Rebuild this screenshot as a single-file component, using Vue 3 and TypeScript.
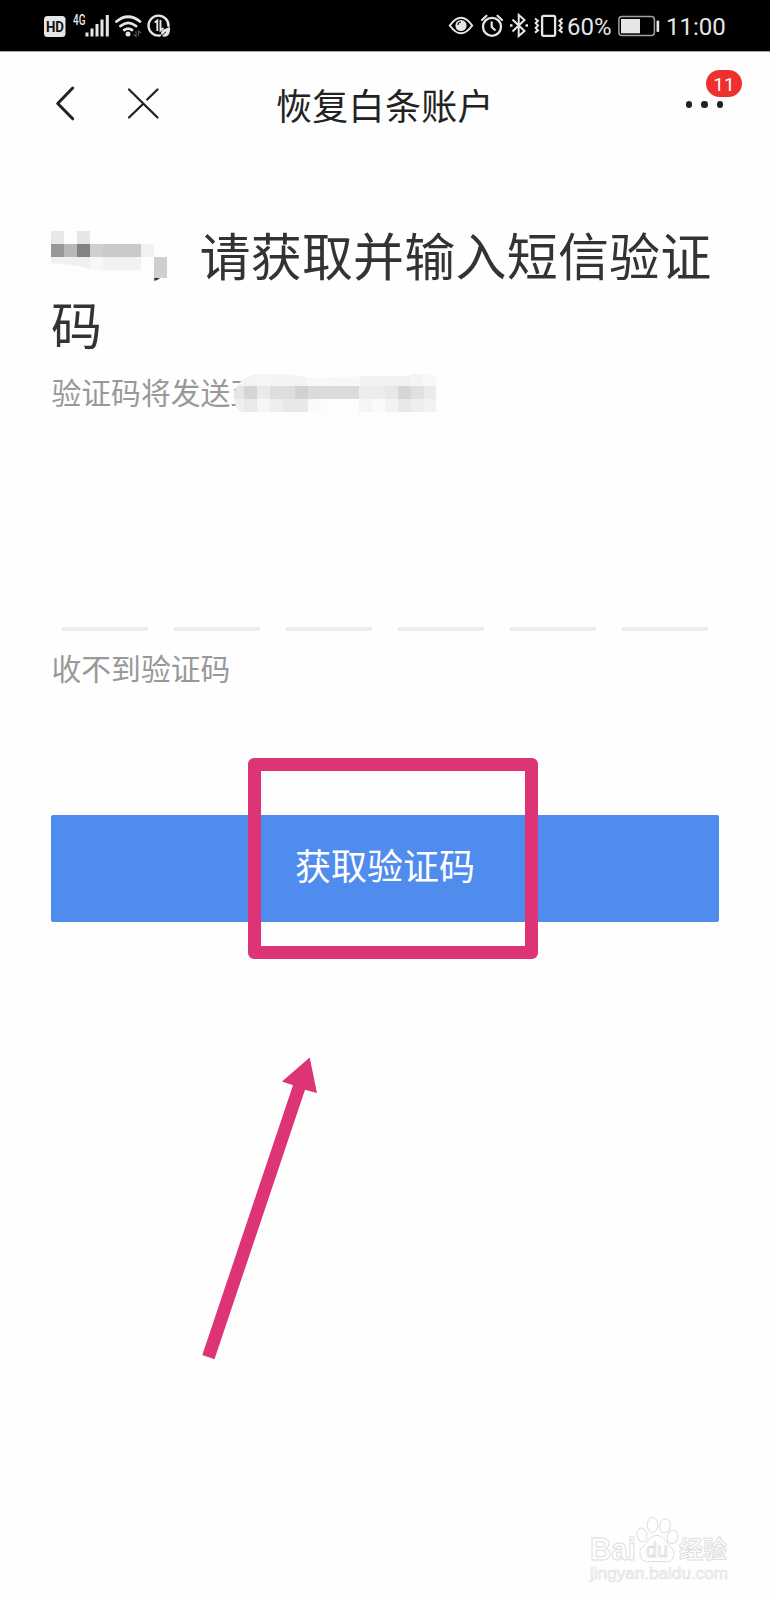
<script setup lang="ts">
interface Tile {
  x: number
  y: number
  w: number
  h: number
  c: string
}

const codeLength = 6

const nameTiles: Tile[] = [
  { x: 51, y: 21, w: 13, h: 13, c: '#e8e8e8' },
  { x: 77, y: 21, w: 13, h: 13, c: '#e6e6e6' },
  { x: 51, y: 34, w: 13, h: 13, c: '#989898' },
  { x: 64, y: 34, w: 13, h: 13, c: '#b8b8b8' },
  { x: 77, y: 34, w: 13, h: 13, c: '#838383' },
  { x: 90, y: 34, w: 13, h: 13, c: '#cfcfcf' },
  { x: 103, y: 34, w: 38, h: 13, c: '#c9c9c9' },
  { x: 141, y: 34, w: 13, h: 13, c: '#f1f1f1' },
  { x: 90, y: 47, w: 13, h: 13, c: '#f7f7f7' },
  { x: 103, y: 47, w: 38, h: 13, c: '#f2f2f2' },
  { x: 154, y: 47, w: 13, h: 21, c: '#cfcfcf' },
]

const phoneTiles: Tile[] = [
  { x: 0, y: 0, w: 23, h: 12, c: '#f3f3f3' },
  { x: 23, y: 0, w: 13, h: 12, c: '#f6f6f6' },
  { x: 36, y: 0, w: 37, h: 12, c: '#f4f4f4' },
  { x: 73, y: 3, w: 53, h: 9, c: '#f8f8f8' },
  { x: 126, y: 2, w: 50, h: 10, c: '#f1f1f1' },
  { x: 176, y: 0, w: 13, h: 12, c: '#f4f4f4' },
  { x: 189, y: 0, w: 13, h: 12, c: '#f8f8f8' },
  { x: 0, y: 12, w: 10, h: 13, c: '#e6e6e6' },
  { x: 10, y: 12, w: 13, h: 13, c: '#d5d5d5' },
  { x: 23, y: 12, w: 13, h: 13, c: '#eaeaea' },
  { x: 36, y: 12, w: 25, h: 13, c: '#dedede' },
  { x: 61, y: 12, w: 13, h: 13, c: '#d2d2d2' },
  { x: 74, y: 12, w: 51, h: 13, c: '#dbdbdb' },
  { x: 125, y: 12, w: 26, h: 13, c: '#ededed' },
  { x: 151, y: 12, w: 13, h: 13, c: '#e8e8e8' },
  { x: 164, y: 12, w: 13, h: 13, c: '#d6d6d6' },
  { x: 177, y: 12, w: 13, h: 13, c: '#e0e0e0' },
  { x: 190, y: 12, w: 12, h: 13, c: '#ebebeb' },
  { x: 0, y: 25, w: 10, h: 13, c: '#f0f0f0' },
  { x: 10, y: 25, w: 13, h: 13, c: '#e9e9e9' },
  { x: 23, y: 25, w: 13, h: 13, c: '#f6f6f6' },
  { x: 36, y: 25, w: 13, h: 13, c: '#eeeeee' },
  { x: 49, y: 25, w: 25, h: 13, c: '#e8e8e8' },
  { x: 74, y: 25, w: 13, h: 13, c: '#fafafa' },
  { x: 87, y: 25, w: 38, h: 13, c: '#fdfdfd' },
  { x: 125, y: 25, w: 13, h: 13, c: '#f5f5f5' },
  { x: 138, y: 25, w: 13, h: 13, c: '#fafafa' },
  { x: 151, y: 25, w: 13, h: 13, c: '#f2f2f2' },
  { x: 164, y: 25, w: 13, h: 13, c: '#e8e8e8' },
  { x: 177, y: 25, w: 13, h: 13, c: '#eeeeee' },
  { x: 190, y: 25, w: 12, h: 13, c: '#f2f2f2' },
]
</script>

<template>
  <div class="screen">
    <header class="status">
      <svg class="left-icons" width="130" height="28" viewBox="43 12 130 28" fill="none" stroke="#e6e6e6">
        <rect x="44" y="16" width="21.500" height="21" rx="3.500" fill="#e6e6e6" stroke="none" />
        <text x="46" y="31.800" class="hd" textLength="18" lengthAdjust="spacingAndGlyphs">HD</text>
        <text x="73" y="25" class="net" textLength="12.500" lengthAdjust="spacingAndGlyphs">4G</text>
        <g stroke-width="3">
          <path d="M87 32.500v4M92 28.500v8M97 24v12.500M102 19.500v17M107.300 15v21.500" />
        </g>
        <g stroke-width="2.800" stroke-linecap="round">
          <path d="M116.500 21.500q11.500-9.500 23.500 0M120.500 26q7.700-6.300 15.500 0M124.300 30q3.900-2.800 7.700 0" />
        </g>
        <circle cx="128" cy="34" r="2.500" fill="#e6e6e6" stroke="none" />
        <path d="M136 31v5.500l-2.500-2M138.500 36.500V31l2.500 2" stroke="#555" stroke-width="1.200" />
        <path d="M160 35.500A10 10 0 1 1 168.500 26" stroke-width="2.400" stroke-linecap="round" />
        <path d="M154.800 22.500l2.500-2V31M160.500 20v10.500l3-2.500" stroke-width="1.900" />
        <path d="M161 34c0-4.500 4-5 9-7 .5 7-2 10.500-7 9.500z" fill="#e6e6e6" stroke="none" />
        <path d="M160 37.300l6-5.500" stroke="#000" stroke-width=".9" />
      </svg>
      <div class="right-icons">
        <svg width="118" height="28" viewBox="447 12 118 28" fill="none" stroke="#e6e6e6" stroke-width="2">
          <path d="M449.800 25.500Q461 10 472.200 25.500 461 41 449.800 25.500z" />
          <circle cx="461" cy="25.500" r="5.600" fill="#e6e6e6" stroke="none" />
          <path d="M458 25a3 3 0 0 1 3-3" stroke="#111" stroke-width="1.200" />
          <circle cx="492" cy="26.800" r="9" stroke-width="2.300" />
          <path d="M491.700 21.500v5.500l3.800 3.500" stroke-width="2.200" />
          <path d="M482 20l4.500-4.200M502 20l-4.500-4.200" stroke-width="2.200" stroke-linecap="round" />
          <path d="M512.500 19.500l12 11.500-5.800 5V15l5.800 5-12 11.500" stroke-width="2" />
          <path d="M510 24.300h2.500v2.500H510zM525.500 24.300h2.500v2.500h-2.500z" fill="#e6e6e6" stroke="none" />
          <rect x="542.100" y="15.800" width="13" height="20" rx="1.500" stroke-width="2.300" />
          <path d="M535 18.500l3 2.300-2.300 2.300 2.300 2.400-2.300 2.400 2.300 2.400-3 2.300M562.500 18.500l-3 2.300 2.300 2.300-2.300 2.400 2.300 2.400-2.300 2.400 3 2.300" />
        </svg>
        <span class="percent">60%</span>
        <svg class="battery" width="42" height="22" viewBox="618 15 42 22" fill="none">
          <rect x="618.900" y="16.500" width="35.500" height="19" rx="3" stroke="#a0a0a0" stroke-width="1.500" />
          <rect x="621" y="19" width="19" height="14.300" fill="#e6e6e6" />
          <rect x="656.500" y="20.500" width="2.700" height="11.500" rx="1" fill="#e6e6e6" />
        </svg>
        <span class="clock">11:00</span>
      </div>
    </header>

    <nav class="nav">
      <svg class="nav-icons" width="110" height="40" viewBox="53 85 110 40" fill="none" stroke="#222" stroke-linecap="round" stroke-linejoin="round">
        <path d="M72.700 88L57.700 103.500l15 15.300" stroke-width="3" />
        <path d="M129 89.500l28.500 28M157.500 89.500l-10.300 10M142.500 104.500L129 117.500" stroke-width="2.300" />
      </svg>
      <h1 class="title">恢复白条账户</h1>
      <div class="more">
        <i></i><i></i><i></i>
        <span class="badge">11</span>
      </div>
    </nav>

    <main class="content">
      <h2 class="heading"><span class="name-slot"></span>请获取并输入短信验证<br />码
        <svg class="name-mask" width="185" height="76" viewBox="0 10 185 76">
          <path d="M5 28Q45 15 100 23Q170 28 181 43Q182 61 163 67L90 61Q50 70 15 68Q-4 50 5 28z" fill="#fdfdfd" />
          <rect v-for="(t, i) in nameTiles" :key="i" :x="t.x" :y="t.y" :width="t.w" :height="t.h" :fill="t.c" />
          <path d="M51 47H90V59Q73 54 51 53z" fill="#f0f0f0" />
          <path d="M154 68h6q-2 2-5.500 3z" fill="#333" />
        </svg>
      </h2>
      <p class="sent">验证码将发送至
        <svg class="phone-mask" width="260" height="62" viewBox="0 0 260 62">
          <defs>
            <clipPath id="phone-shape">
              <path d="M0 19Q6 2 24 0Q58-1 73 4L126 2 189-1Q224 4 250 17Q262 27 256 50Q249 53 175 52Q35 51 12 43Q-2 33 0 19z" />
            </clipPath>
          </defs>
          <g clip-path="url(#phone-shape)">
            <rect width="260" height="62" fill="#fdfdfd" />
            <rect v-for="(t, i) in phoneTiles" :key="i" :x="t.x" :y="t.y" :width="t.w" :height="t.h" :fill="t.c" />
          </g>
        </svg>
      </p>
      <div class="code">
        <span v-for="n in codeLength" :key="n" class="digit"></span>
      </div>
      <p class="help">收不到验证码</p>
      <button class="submit" type="button">获取验证码<span class="frame"></span></button>
    </main>

    <svg class="arrow" width="120" height="306" viewBox="200 1055 120 306">
      <path d="M309.700 1057.500L282 1081.500 293 1085.200 202.300 1355 214.500 1359.300 305 1089.700 317 1093z" fill="#dc3474" />
    </svg>

    <svg class="watermark" width="150" height="75" viewBox="585 1512 150 75">
      <g fill="#fefefe" stroke="#dedede" stroke-width="1">
        <text x="590" y="1560" class="brand" textLength="46" lengthAdjust="spacingAndGlyphs">Bai</text>
        <ellipse cx="641.800" cy="1535" rx="5" ry="7" transform="rotate(-12 641.800 1535)" />
        <ellipse cx="652.500" cy="1525" rx="5.300" ry="7.500" />
        <ellipse cx="665" cy="1525.800" rx="5.300" ry="7" transform="rotate(15 665 1525.800)" />
        <ellipse cx="672.500" cy="1537" rx="5.300" ry="6.800" transform="rotate(15 672.500 1537)" />
        <path d="M657 1535.500c-8 0-8 6-13 10-4 3-5 6-3.500 11 2 7 9 5 17 5s14 2 16-5c1.500-5-1-8-4-11-5-4-5-10-12.500-10z" />
        <text x="646" y="1557" class="du" textLength="22" lengthAdjust="spacingAndGlyphs">du</text>
        <text x="679" y="1558" class="cn" textLength="48">经验</text>
      </g>
      <text x="590" y="1579" class="url" textLength="138" lengthAdjust="spacingAndGlyphs">jingyan.baidu.com</text>
    </svg>
  </div>
</template>

<style>
body {
  background: #fefefe;
}
</style>

<style scoped>
.screen {
  position: relative;
  width: 770px;
  height: 1600px;
  overflow: hidden;
  background: #fefefe;
  font-family: "Noto Sans CJK SC", sans-serif;
  color: #333;
}
.status {
  display: flex;
  justify-content: space-between;
  align-items: center;
  box-sizing: border-box;
  height: 52px;
  padding: 1px 43px 0;
  border-bottom: 1px solid #aaa;
  background: #000;
  color: #e6e6e6;
}
.hd {
  font: 700 15px Roboto, sans-serif;
  fill: #111;
  stroke: none;
}
.net {
  font: 500 14px Roboto, sans-serif;
  fill: #e6e6e6;
  stroke: none;
}
.right-icons {
  display: flex;
  align-items: center;
  font: 24px/28px Roboto, sans-serif;
}
.percent {
  width: 46px;
  margin-left: 2px;
  padding-top: 1px;
}
.battery {
  margin-left: 5px;
}
.clock {
  width: 61px;
  margin-left: 6px;
  padding-top: 1px;
}
.nav {
  display: grid;
  grid-template-columns: 223px auto 1fr;
  align-items: center;
  height: 105px;
  padding: 0 46px 0 53px;
}
.title {
  margin: 0;
  font-size: 36px;
  line-height: 52px;
  font-weight: 400;
  letter-spacing: 0.3px;
  color: #222;
  transform: translateY(-1px);
}
.more {
  position: relative;
  display: flex;
  justify-content: flex-end;
  gap: 9px;
  padding-right: 1px;
}
.more i {
  width: 6.5px;
  height: 6.5px;
  border-radius: 50%;
  background: #222;
}
.badge {
  position: absolute;
  right: -18px;
  top: -31px;
  width: 36px;
  height: 27px;
  border-radius: 14px;
  background: #ee3030;
  color: #fff;
  font: 19px/29px Roboto, sans-serif;
  text-align: center;
}
.content {
  padding: 63px 51px 0;
}
.heading {
  position: relative;
  margin: 0;
  font-size: 51px;
  line-height: 68.5px;
  font-weight: 400;
  letter-spacing: 0.2px;
  white-space: nowrap;
}
.name-slot {
  display: inline-block;
  width: 148.5px;
}
.name-mask {
  position: absolute;
  left: -51px;
  top: 0;
}
.sent,
.help {
  margin: 0;
  padding-left: 0.5px;
  font-size: 29.8px;
  line-height: 44px;
  color: #999;
}
.sent {
  position: relative;
  margin-top: 12px;
}
.phone-mask {
  position: absolute;
  left: 183px;
  top: 5px;
}
.code {
  display: flex;
  justify-content: space-between;
  margin: 214px 11px 0;
}
.digit {
  width: 86px;
  height: 4px;
  background: #ededed;
}
.help {
  margin-top: 14px;
}
.submit {
  position: relative;
  display: block;
  width: 668px;
  height: 107px;
  margin-top: 126px;
  padding: 0 0 10px;
  border: 0;
  border-radius: 2px;
  background: #508ced;
  color: #fff;
  font: 36px/52px "Noto Sans CJK SC", sans-serif;
}
.frame {
  position: absolute;
  left: 197px;
  top: -57px;
  box-sizing: border-box;
  width: 290px;
  height: 201px;
  border: 13px solid #dc3474;
  border-radius: 6px;
}
.arrow {
  position: absolute;
  left: 200px;
  top: 1055px;
}
.watermark {
  position: absolute;
  left: 585px;
  top: 1512px;
}
.brand {
  font: 700 31px "Liberation Sans", sans-serif;
}
.du {
  font: 21px "Liberation Sans", sans-serif;
}
.cn {
  font: 700 24px "Noto Sans CJK SC", sans-serif;
}
.url {
  font: 16px "Liberation Sans", sans-serif;
  fill: #f2f2f2;
  stroke: #e4e4e4;
  stroke-width: 0.6px;
}
</style>
